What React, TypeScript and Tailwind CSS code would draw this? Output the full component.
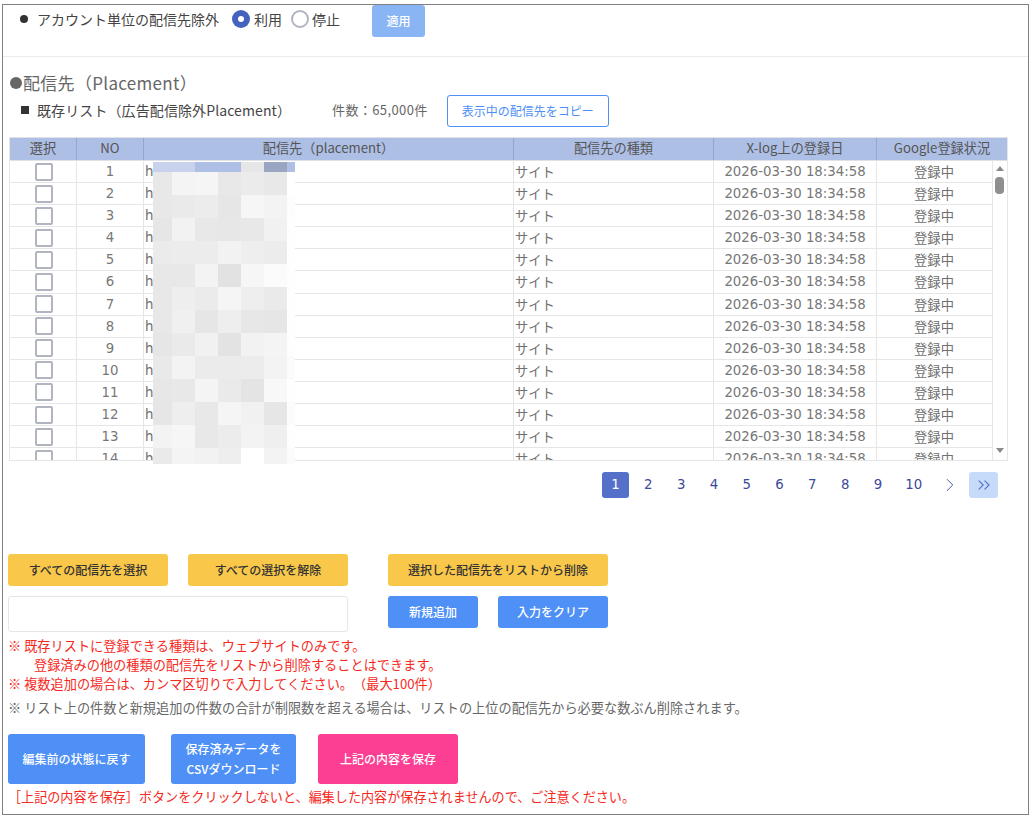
import React from 'react';
import { ChevronRight, ChevronsRight } from 'lucide-react';

const font = 'font-["Noto_Sans_CJK_JP","Noto_Sans",sans-serif]';
const wide = 'font-["DejaVu_Sans","Noto_Sans_CJK_JP",sans-serif]';

const rows = Array.from({ length: 14 }, (_, i) => i + 1);

const mosaic = [
  ['#c8d2ec', '#c8d2ec', '#aebfe6', '#aebfe6', '#e6e6e6', '#9aa5c2', '#aebfe6'],
  ['#e8e8e8', '#f4f4f4', '#f5f5f5', '#e8e8e8', '#ebebeb', '#e8e8e8', '#ffffff'],
  ['#e8e8e8', '#eaeaea', '#ececec', '#e6e6e6', '#f6f6f6', '#f3f3f3', '#fdfdfd'],
  ['#e6e6e6', '#f2f2f2', '#e8e8e8', '#e7e7e7', '#e8e8e8', '#f1f1f1', '#fefefe'],
  ['#ebebeb', '#ececec', '#ececec', '#f2f2f2', '#eeeeee', '#ececec', '#fefefe'],
  ['#e8e8e8', '#e8e8e8', '#f3f3f3', '#e2e2e2', '#f6f6f6', '#fbfbfb', '#fefefe'],
  ['#e8e8e8', '#eeeeee', '#ebebeb', '#f5f5f5', '#eeeeee', '#eaeaea', '#fefefe'],
  ['#e8e8e8', '#f0f0f0', '#e6e6e6', '#eeeeee', '#e7e7e7', '#e6e6e6', '#fefefe'],
  ['#e6e6e6', '#eaeaea', '#f1f1f1', '#e3e3e3', '#f2f2f2', '#f4f4f4', '#fefefe'],
  ['#e9e9e9', '#f3f3f3', '#ebebeb', '#ebebeb', '#ececec', '#f3f3f3', '#fbfbfb'],
  ['#e7e7e7', '#e8e8e8', '#f4f4f4', '#eaeaea', '#e4e4e4', '#f8f8f8', '#fefefe'],
  ['#e6e6e6', '#eeeeee', '#e8e8e8', '#f5f5f5', '#f1f1f1', '#e6e6e6', '#fcfcfc'],
  ['#f3f3f3', '#f6f6f6', '#e8e8e8', '#ececec', '#f3f3f3', '#efefef', '#fefefe'],
  ['#eaeaea', '#f4f4f4', '#f2f2f2', '#eeeeee', '#ffffff', '#f3f3f3', '#fbfbfb'],
];

const Mosaic = () => (
  <div className="absolute left-[149.5px] top-[156.5px] flex h-[302px] w-[142px] flex-col overflow-hidden">
    {mosaic.map((line, r) => (
      <div key={r} className={r === 0 ? 'flex h-[10px] shrink-0' : 'flex h-[23px] shrink-0'}>
        {line.map((c, k) => (
          <div
            key={k}
            className={k === 0 ? 'w-[19px]' : k === 6 ? 'w-[8px]' : 'w-[23px]'}
            style={{ backgroundColor: c }}
          />
        ))}
      </div>
    ))}
  </div>
);

const Row = ({ n }: { n: number }) => (
  <div className="flex h-[22.1px] shrink-0 border-b border-[#e6e6e6] text-[13.3px] leading-[21px] text-[#707070]">
    <div className="flex w-[67px] items-center justify-center border-r border-[#e6e6e6]">
      <span className="ml-px h-[18px] w-[18px] rounded-[2px] border-2 border-[#b0b5bf] bg-white" />
    </div>
    <div className={`w-[67px] border-r border-[#e6e6e6] text-center text-[#777] ${wide}`}>{n}</div>
    <div className={`w-[370px] border-r border-[#e6e6e6] pl-px ${wide}`}>h</div>
    <div className="w-[200px] border-r border-[#e6e6e6] pl-px">サイト</div>
    <div className={`w-[163px] border-r border-[#e6e6e6] text-center text-[#777] ${wide}`}>2026-03-30 18:34:58</div>
    <div className="w-[114px] text-center">登録中</div>
  </div>
);

const Scrollbar = () => (
  <div className="flex w-[15px] flex-col items-center border-l border-[#e6e6e6] bg-white pr-px">
    <div className="mt-[5px] h-0 w-0 border-x-[4px] border-b-[5px] border-x-transparent border-b-[#8a8a8a]" />
    <div className="mt-[6px] h-[17px] w-[9px] rounded-[4px] bg-[#8f8f8f]" />
    <div className="flex-1" />
    <div className="mb-[7px] h-0 w-0 border-x-[4px] border-t-[5px] border-x-transparent border-t-[#8a8a8a]" />
  </div>
);

const Table = () => (
  <div className="ml-[6px] w-[999px] border-x border-b border-[#e6e6e6]">
    <div className="flex h-[24px] border-y border-[#dfe1e6] bg-[#aebfe6] text-[13.2px] leading-[20px] text-[#555]">
      <div className="w-[67px] border-r border-[#97a6cc] text-center">選択</div>
      <div className="w-[67px] border-r border-[#97a6cc] text-center">NO</div>
      <div className="w-[370px] border-r border-[#97a6cc] text-center">配信先（placement）</div>
      <div className="w-[200px] border-r border-[#97a6cc] text-center">配信先の種類</div>
      <div className="w-[163px] border-r border-[#97a6cc] text-center">X-log上の登録日</div>
      <div className="flex-1 text-center">Google登録状況</div>
    </div>
    <div className="flex h-[299px] overflow-hidden">
      <div className="flex w-[983px] flex-col">
        {rows.map((n) => (
          <Row key={n} n={n} />
        ))}
      </div>
      <Scrollbar />
    </div>
  </div>
);

const Pager = () => (
  <div className={`mt-[11px] mr-[30px] flex items-center justify-end text-[13.3px] text-[#3b4a9a] ${wide}`}>
    {[1, 2, 3, 4, 5, 6, 7, 8, 9, 10].map((n) => (
      <div
        key={n}
        className={
          n === 1
            ? 'mr-[5.8px] flex h-[26px] w-[27px] items-center justify-center rounded-[3px] bg-[#5470c9] text-white'
            : n === 10
              ? 'mr-[6px] flex h-[26px] w-[33px] items-center justify-center'
              : 'mr-[5.8px] flex h-[26px] w-[27px] items-center justify-center'
        }
      >
        {n}
      </div>
    ))}
    <div className="mr-[5.8px] flex h-[26px] w-[27px] items-center justify-center">
      <ChevronRight size={22} strokeWidth={1} />
    </div>
    <div className="flex h-[26px] w-[29px] items-center justify-center rounded-[3px] bg-[#c6daf9] text-[#5470c9]">
      <ChevronsRight size={20} strokeWidth={1.3} />
    </div>
  </div>
);

const yellow =
  'flex h-[32px] items-center justify-center rounded-[3px] bg-[#f9c74a] text-[12px] font-medium text-[#333]';
const blue =
  'flex items-center justify-center rounded-[3px] bg-[#4e90f5] text-center text-[12px] font-medium text-white';

export default function App() {
  return (
    <div
      className={`relative mx-[2px] mt-[4px] h-[811px] w-[1027px] border-[1.5px] border-[#808080] bg-white [text-spacing-trim:space-all] ${font}`}
    >
      <div className="flex h-[52px] items-start border-b border-[#ebebeb]">
        <div className="ml-[17px] mt-[3px] flex items-center text-[14px] leading-[22px] text-[#444]">
          <span className="mr-[9px] h-[8px] w-[8px] rounded-full bg-[#333]" />
          <span>アカウント単位の配信先除外</span>
          <span className="ml-[13px] mr-[4px] flex h-[18px] w-[18px] items-center justify-center rounded-full bg-[#4463bd]">
            <span className="h-[6px] w-[6px] rounded-full bg-white" />
          </span>
          <span>利用</span>
          <span className="ml-[9px] mr-[3px] h-[18px] w-[18px] rounded-full border-2 border-[#b0b5bf]" />
          <span>停止</span>
        </div>
        <div className="ml-[32px] flex h-[32px] w-[53px] items-center justify-center rounded-[3px] bg-[#8ab5f5] text-[12px] font-medium text-white">
          適用
        </div>
      </div>

      <div className="ml-[7px] mt-[14px] flex items-center text-[17px] leading-[24px] tracking-[0.3px] text-[#666]">
        <span className="mr-px h-[12px] w-[12px] rounded-full bg-[#666]" />
        <span>配信先（Placement）</span>
      </div>
      <div className="-mt-px flex h-[32px] items-center text-[14px] text-[#444]">
        <span className="ml-[18px] mr-[8px] h-[8px] w-[8px] bg-[#333]" />
        <span className="tracking-[0.1px]">既存リスト（広告配信除外Placement）</span>
        <span className="ml-[41px] text-[13px] tracking-[0.4px] text-[#666]">件数：65,000件</span>
        <div className="ml-[19px] mt-[2px] flex h-[32px] w-[162px] items-center justify-center rounded-[3px] border border-[#4e90f5] text-[12px] text-[#4e90f5]">
          表示中の配信先をコピー
        </div>
      </div>
      <div className="mt-[11px]">
        <Table />
      </div>
      <Pager />

      <div className="ml-[5px] mt-[56px] flex">
        <div className={`${yellow} w-[160px]`}>すべての配信先を選択</div>
        <div className={`${yellow} ml-[20px] w-[160px]`}>すべての選択を解除</div>
        <div className={`${yellow} ml-[40px] w-[220px]`}>選択した配信先をリストから削除</div>
      </div>
      <div className="ml-[5px] mt-[10px] flex items-start">
        <div className="h-[36px] w-[340px] rounded-[3px] border border-[#e6e6e6]" />
        <div className={`${blue} ml-[40px] h-[32px] w-[90px]`}>新規追加</div>
        <div className={`${blue} ml-[20px] h-[32px] w-[110px]`}>入力をクリア</div>
      </div>
      <div className="ml-[5px] mt-[4px] text-[13.2px] leading-[19px] text-[#f52a1e]">
        <div>※ 既存リストに登録できる種類は、ウェブサイトのみです。</div>
        <div className="pl-[26px]">登録済みの他の種類の配信先をリストから削除することはできます。</div>
        <div>※ 複数追加の場合は、カンマ区切りで入力してください。（最大100件）</div>
      </div>
      <div className="ml-[5px] mt-[5px] text-[13.2px] leading-[19px] text-[#666]">
        ※ リスト上の件数と新規追加の件数の合計が制限数を超える場合は、リストの上位の配信先から必要な数ぶん削除されます。
      </div>
      <div className="ml-[5px] mt-[17px] flex">
        <div className={`${blue} h-[50px] w-[137px]`}>編集前の状態に戻す</div>
        <div className={`${blue} ml-[26px] h-[50px] w-[125px] leading-[20px]`}>
          保存済みデータを
          <br />
          CSVダウンロード
        </div>
        <div className="ml-[22px] flex h-[50px] w-[140px] items-center justify-center rounded-[3px] bg-[#fc3f93] text-[12px] font-medium text-white">
          上記の内容を保存
        </div>
      </div>
      <div className="ml-[5px] mt-[3px] text-[13.1px] leading-[19px] text-[#f52a1e]">
        ［上記の内容を保存］ボタンをクリックしないと、編集した内容が保存されませんので、ご注意ください。
      </div>
      <Mosaic />
    </div>
  );
}
